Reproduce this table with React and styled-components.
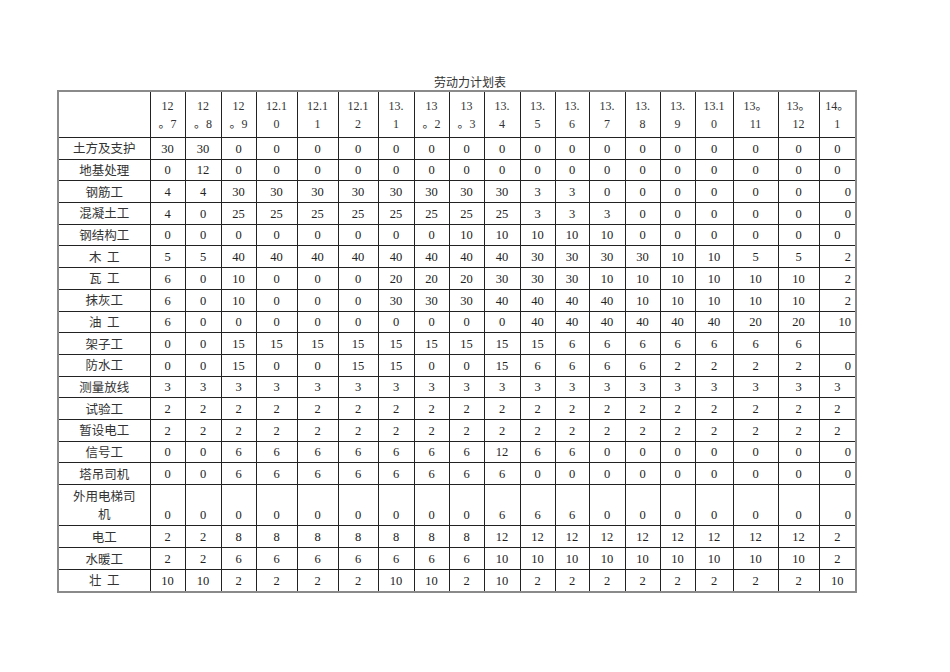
import React from "react";
import styled, { createGlobalStyle } from "styled-components";

const GlobalStyle = createGlobalStyle`
  html, body {
    margin: 0;
    padding: 0;
    background: #ffffff;
  }
  body {
    font-family: "Liberation Serif", "Noto Sans CJK SC", serif;
    color: #222;
  }
`;

// 表头（每个月份拆成两行显示）
const months = [
  ["12", "。7"], ["12", "。8"], ["12", "。9"], ["12.1", "0"], ["12.1", "1"],
  ["12.1", "2"], ["13.", "1"], ["13", "。2"], ["13", "。3"], ["13.", "4"],
  ["13.", "5"], ["13.", "6"], ["13.", "7"], ["13.", "8"], ["13.", "9"],
  ["13.1", "0"], ["13。", "11"], ["13。", "12"], ["14。", "1"],
];

const colWidths = [92, 35, 36, 35, 41, 41, 40, 36, 35, 35, 36, 35, 34, 36, 35, 35, 38, 45, 41, 37];

const rep = (v, n) => Array(n).fill(v);

// last: 最后一列对齐方式 c=居中 r=靠右
const rows = [
  { name: "土方及支护", data: [30, 30, ...rep(0, 17)], last: "c" },
  { name: "地基处理", data: [0, 12, ...rep(0, 17)], last: "c" },
  { name: "钢筋工", data: [4, 4, ...rep(30, 8), 3, 3, ...rep(0, 7)], last: "r" },
  { name: "混凝土工", data: [4, 0, ...rep(25, 8), 3, 3, 3, ...rep(0, 6)], last: "r" },
  { name: "钢结构工", data: [...rep(0, 8), ...rep(10, 5), ...rep(0, 6)], last: "c" },
  { name: "木  工", data: [5, 5, ...rep(40, 8), ...rep(30, 4), 10, 10, 5, 5, 2], last: "r" },
  { name: "瓦  工", data: [6, 0, 10, 0, 0, 0, 20, 20, 20, 30, 30, 30, ...rep(10, 6), 2], last: "r" },
  { name: "抹灰工", data: [6, 0, 10, 0, 0, 0, 30, 30, 30, 40, 40, 40, 40, ...rep(10, 5), 2], last: "r" },
  { name: "油  工", data: [6, ...rep(0, 9), ...rep(40, 6), 20, 20, 10], last: "r" },
  { name: "架子工", data: [0, 0, ...rep(15, 9), ...rep(6, 7), ""], last: "c" },
  { name: "防水工", data: [0, 0, 15, 0, 0, 15, 15, 0, 0, 15, 6, 6, 6, 6, 2, 2, 2, 2, 0], last: "r" },
  { name: "测量放线", data: rep(3, 19), last: "c" },
  { name: "试验工", data: rep(2, 19), last: "c" },
  { name: "暂设电工", data: rep(2, 19), last: "c" },
  { name: "信号工", data: [0, 0, ...rep(6, 7), 12, 6, 6, ...rep(0, 7)], last: "r" },
  { name: "塔吊司机", data: [0, 0, ...rep(6, 8), ...rep(0, 9)], last: "r" },
  { name: "外用电梯司机", lines: ["外用电梯司", "机"], data: [...rep(0, 9), 6, 6, 6, ...rep(0, 7)], last: "r", tall: true },
  { name: "电工", data: [2, 2, ...rep(8, 7), ...rep(12, 9), 2], last: "c", end: true },
  { name: "水暖工", data: [2, 2, ...rep(6, 7), ...rep(10, 9), 2], last: "c", end: true },
  { name: "壮  工", data: [10, 10, 2, 2, 2, 2, 10, 10, 2, 10, ...rep(2, 8), 10], last: "c", end: true },
];

const App = () => {
  return (
    <Page>
      <GlobalStyle />
      <Title>劳动力计划表</Title>
      <Sheet>
        <colgroup>
          {colWidths.map((w, i) => (
            <col key={i} style={{ width: w }} />
          ))}
        </colgroup>
        <thead>
          <tr>
            <HeadCell />
            {months.map((m, i) => (
              <HeadCell key={i}>
                {m[0]}
                <br />
                {m[1]}
              </HeadCell>
            ))}
          </tr>
        </thead>
        <tbody>
          {rows.map((r) => (
            <Row key={r.name} $tall={r.tall} $end={r.end}>
              <LabelCell>
                {r.lines ? (
                  <>
                    {r.lines[0]}
                    <br />
                    {r.lines[1]}
                  </>
                ) : (
                  r.name
                )}
              </LabelCell>
              {r.data.map((v, i) => (
                <NumCell key={i} $right={i === r.data.length - 1 && r.last === "r"}>
                  {v}
                </NumCell>
              ))}
            </Row>
          ))}
        </tbody>
      </Sheet>
    </Page>
  );
};

const Page = styled.div`
  width: 950px;
  height: 672px;
  padding: 74px 0 0 57px;
  box-sizing: border-box;
`;

const Title = styled.div`
  width: 798px;
  text-align: center;
  font-family: "Noto Sans CJK SC", sans-serif;
  font-size: 12px;
  line-height: 16px;
  color: #333;
  padding-left: 28px;
  box-sizing: border-box;
`;

const Sheet = styled.table`
  table-layout: fixed;
  width: 798px;
  border-collapse: collapse;
  border: 2px solid #8a8a8a;
  font-size: 12.5px;
  color: #222;
`;

const HeadCell = styled.th`
  height: 45px;
  padding: 0;
  border: 1px solid #222;
  font-weight: normal;
  font-size: 12px;
  line-height: 18px;
  text-align: center;
  vertical-align: middle;
  color: #333;
`;

const Row = styled.tr`
  height: ${(p) => (p.$tall ? "41px" : p.$end ? "22px" : "21.7px")};
`;

const LabelCell = styled.td`
  padding: 0;
  border: 1px solid #222;
  font-family: "Noto Sans CJK SC", sans-serif;
  font-size: 12.5px;
  line-height: 18px;
  text-align: center;
  vertical-align: middle;
  white-space: pre;
  color: #333;
`;

const NumCell = styled.td`
  padding: 0 ${(p) => (p.$right ? "4px" : "0")} 1px 0;
  border: 1px solid #222;
  font-size: 12.5px;
  line-height: 18px;
  text-align: ${(p) => (p.$right ? "right" : "center")};
  vertical-align: bottom;
`;

export default App;
